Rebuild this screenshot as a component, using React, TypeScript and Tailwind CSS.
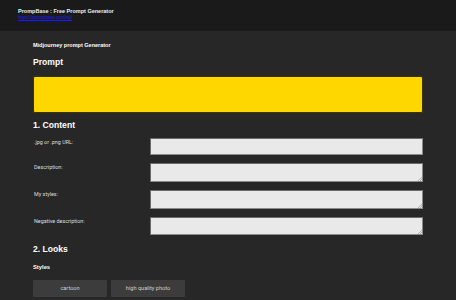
import React from "react";

const fields = [
  { label: ".jpg or .png URL:", kind: "input", h: "h-[17px]" },
  { label: "Description:", kind: "textarea", h: "h-[19px]" },
  { label: "My styles:", kind: "textarea", h: "h-[19px]" },
  { label: "Negative description:", kind: "textarea", h: "h-[18px]" },
];

const styles = ["cartoon", "high quality photo"];

export default function App() {
  return (
    <div className="min-h-screen bg-[#272727] font-['Liberation_Sans',Arial,sans-serif] text-white">
      {/* Top bar */}
      <div className="h-[31px] bg-[#1a1a1a] pl-[18px] pt-[8px]">
        <div className="text-[5.5px] font-bold leading-[7px] text-[#f0f0f0]">
          PrompBase : Free Prompt Generator
        </div>
        <a
          href="#"
          className="block text-[4.6px] leading-[6px] text-[#1a1aff] underline"
        >
          https://prompbase.com/mj/
        </a>
      </div>

      <div className="px-[33px]">
        <div className="mt-[10px] text-[5.5px] font-bold leading-[8px]">
          Midjourney prompt Generator
        </div>
        <h2 className="mt-[7px] text-[8.6px] font-bold leading-[12px]">Prompt</h2>
        <div className="mt-[8px] h-[37px] rounded-[2px] border border-[#3a3300] bg-[#ffd700]" />

        <h2 className="mt-[6px] text-[8.6px] font-bold leading-[12px]">1. Content</h2>
        <div className="mt-[7px] flex flex-col gap-[8px]">
          {fields.map((f) => (
            <div key={f.label} className="flex">
              <label className="w-[117px] pl-[1px] font-['Roboto',sans-serif] text-[5.4px] leading-[8px] text-[#dedede]">
                {f.label}
              </label>
              {f.kind === "input" ? (
                <input
                  className={`block flex-1 ${f.h} border border-[#8a8a8a] border-t-[#6a6a6a] border-l-[#6a6a6a] bg-[#e9e9e9] outline-none`}
                />
              ) : (
                <div className="relative flex flex-1">
                  <textarea
                    className={`block flex-1 resize-none ${f.h} border border-[#8a8a8a] border-t-[#6a6a6a] border-l-[#6a6a6a] bg-[#e9e9e9] outline-none`}
                  />
                  {/* small resize grip */}
                  <svg
                    className="pointer-events-none absolute bottom-[1px] right-[1px]"
                    width="4"
                    height="4"
                    viewBox="0 0 4 4"
                  >
                    <path d="M4 0 L0 4 M4 2 L2 4" stroke="#9a9a9a" strokeWidth="0.7" />
                  </svg>
                </div>
              )}
            </div>
          ))}
        </div>

        <h2 className="mt-[8px] text-[8.6px] font-bold leading-[12px]">2. Looks</h2>
        <div className="mt-[8px] text-[5.8px] font-bold leading-[8px]">Styles</div>
        <div className="mt-[9px] flex gap-[4px]">
          {styles.map((s) => (
            <button
              key={s}
              className="h-[17px] w-[74px] rounded-[1px] bg-[#3c3c3c] font-['Roboto',sans-serif] text-[5.6px] text-[#cfcfcf]"
            >
              {s}
            </button>
          ))}
        </div>
      </div>
    </div>
  );
}
